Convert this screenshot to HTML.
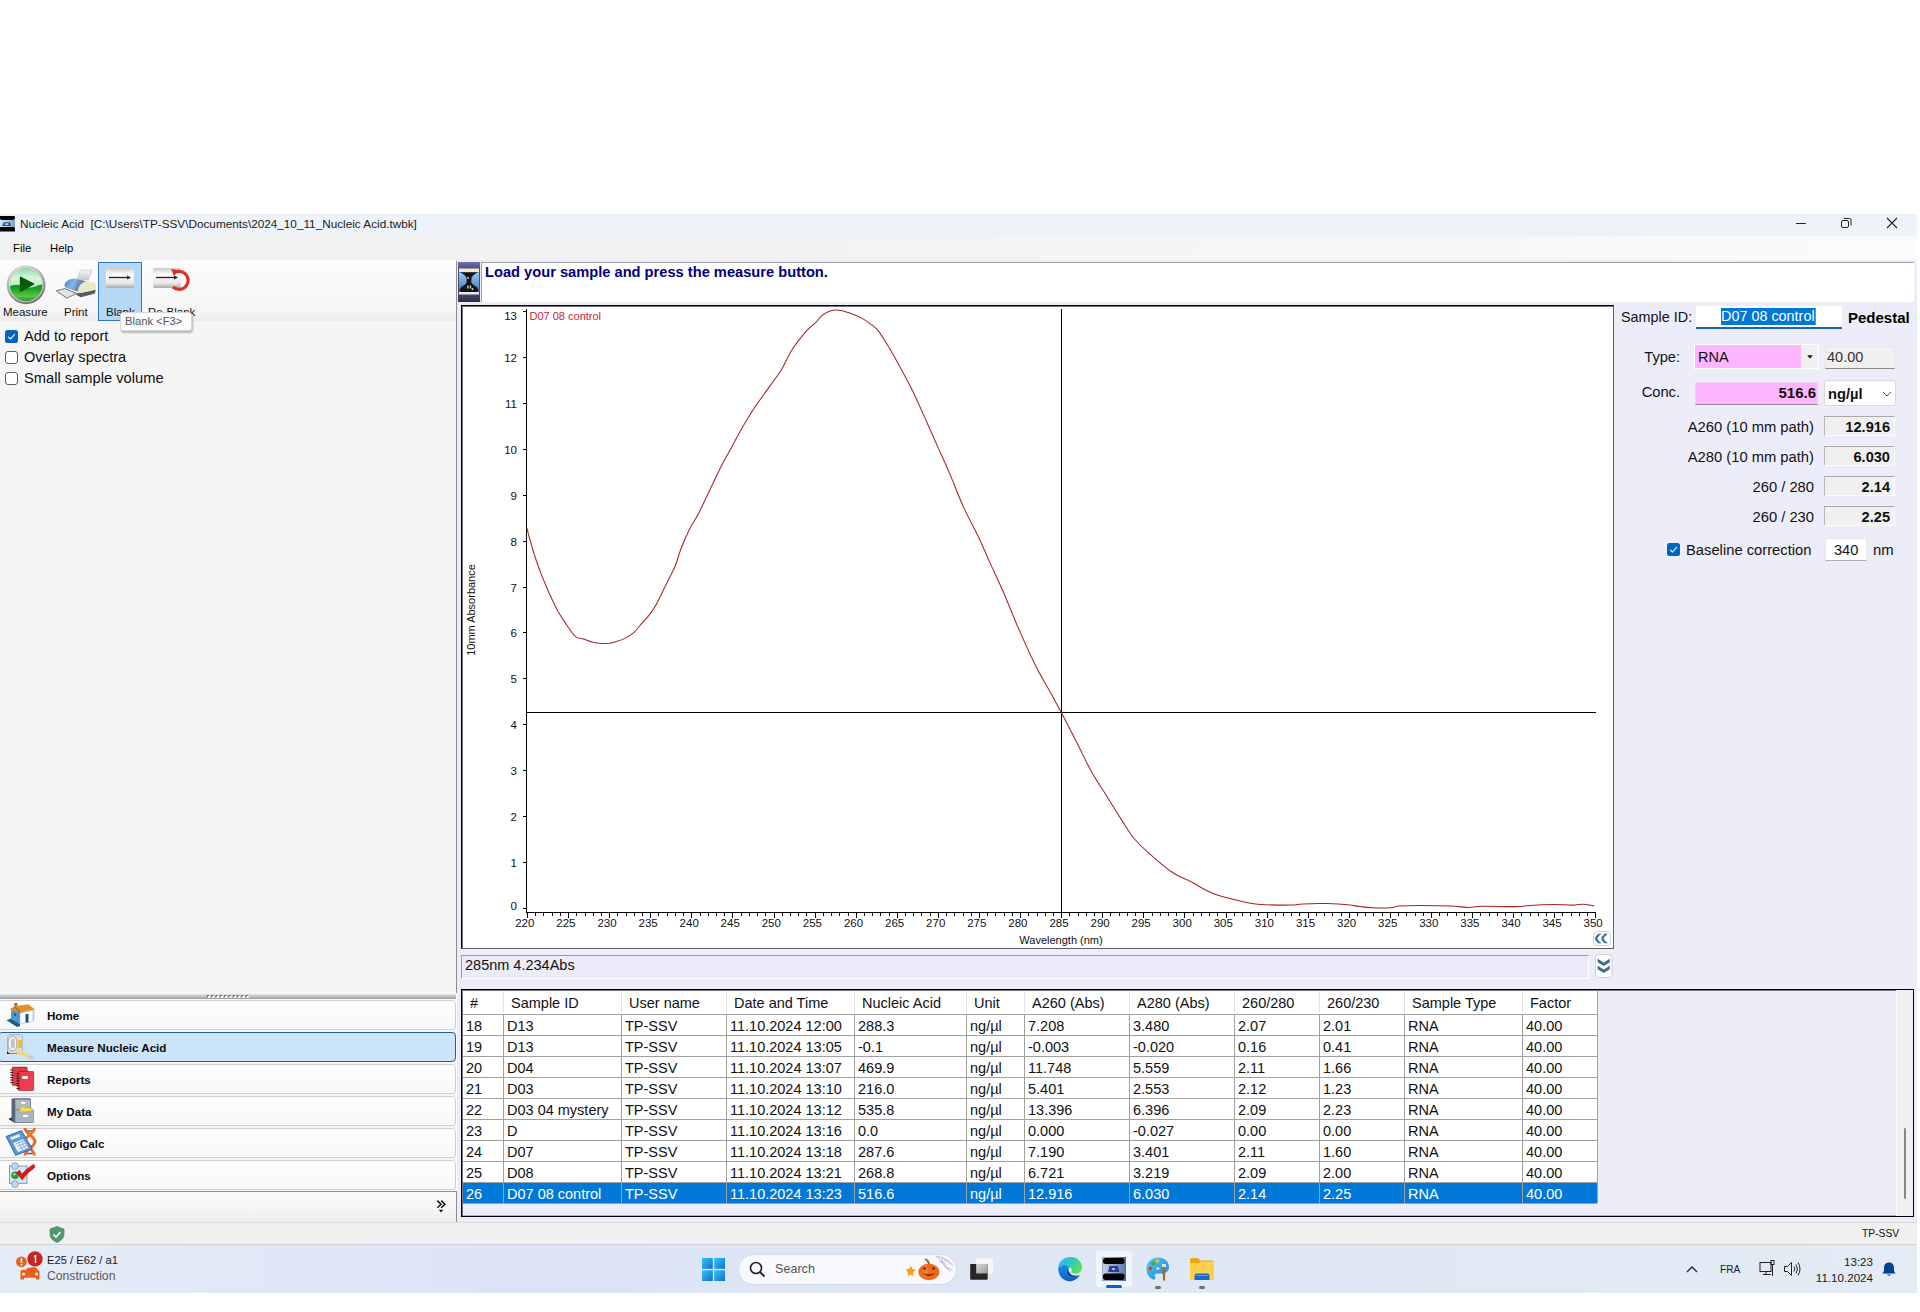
<!DOCTYPE html><html><head><meta charset="utf-8"><style>
*{box-sizing:border-box}
html,body{margin:0;padding:0}
body{width:1920px;height:1312px;position:relative;overflow:hidden;background:#fff;font-family:"Liberation Sans", sans-serif;color:#000}
.a{position:absolute}
.t{position:absolute;white-space:nowrap;line-height:1}
</style></head><body>

<div class="a" style="left:0;top:214px;width:1917px;height:22px;background:#eef2f9;border-top:1px solid #e9ecf2"></div>
<svg class="a" style="left:0;top:216px" width="16" height="16" viewBox="0 0 16 16">
<defs><linearGradient id="ti" x1="0" y1="0" x2="1" y2="0"><stop offset="0" stop-color="#d6e2ef"/><stop offset="0.6" stop-color="#a9c4e2"/><stop offset="1" stop-color="#7f9cc0"/></linearGradient></defs>
<rect x="0" y="3.5" width="15" height="8" fill="url(#ti)"/>
<path d="M0,0 H14 Q15,0 15,1 V2.5 L13,4 H1.5 L0,3 Z" fill="#050505"/>
<path d="M2,10 L3.8,6.3 H10.2 L11,10 Z" fill="#27579a"/>
<ellipse cx="6.7" cy="8.1" rx="2.1" ry="0.9" fill="#a9d2fa"/>
<path d="M0,11 H14 L15,12 V15.6 H0 Z" fill="#050505"/>
</svg>
<div class="t" style="left:20px;top:218px;font-size:11.75px;color:#1a1a1a">Nucleic Acid&nbsp; [C:\Users\TP-SSV\Documents\2024_10_11_Nucleic Acid.twbk]</div>
<div class="a" style="left:1796px;top:223px;width:10px;height:1px;background:#222"></div>
<svg class="a" style="left:1840px;top:217px" width="13" height="12" viewBox="0 0 13 12"><rect x="1.5" y="3.5" width="7" height="7" rx="1.5" fill="none" stroke="#222" stroke-width="1"/><path d="M4,1.5 H9.5 A1.5,1.5 0 0 1 11,3 V8.5" fill="none" stroke="#222" stroke-width="1"/></svg>
<svg class="a" style="left:1886px;top:217px" width="12" height="12" viewBox="0 0 12 12"><path d="M1,1 L11,11 M11,1 L1,11" stroke="#222" stroke-width="1.1"/></svg>
<div class="a" style="left:0;top:236px;width:1917px;height:24px;background:linear-gradient(90deg,#f1f1f1 0%,#f3f3f3 45%,#f7f7f7 75%,#fbfbfb 100%)"></div>
<div class="t" style="left:13px;top:243px;font-size:11.3px">File</div>
<div class="t" style="left:50px;top:243px;font-size:11.3px">Help</div>
<div class="a" style="left:0;top:260px;width:456px;height:962px;background:#f5f5f5"></div>
<div class="a" style="left:0;top:260px;width:456px;height:61px;background:linear-gradient(#fcfcfc 0%,#f8f8f8 50%,#f5f5f5 85%,#ebebeb 100%)"></div>
<div class="a" style="left:456px;top:261px;width:1px;height:732px;background:#8e8e8e"></div>
<svg class="a" style="left:5px;top:264px" width="42" height="42" viewBox="0 0 42 42">
<defs><linearGradient id="gr" x1="0.3" y1="0" x2="0.7" y2="1"><stop offset="0" stop-color="#d9d9d9"/><stop offset="1" stop-color="#6f6f6f"/></linearGradient>
<linearGradient id="gt" x1="0" y1="0" x2="0" y2="1"><stop offset="0" stop-color="#8fdca6"/><stop offset="0.5" stop-color="#d6f6dc"/><stop offset="1" stop-color="#b9ecc4"/></linearGradient>
<linearGradient id="gb" x1="0" y1="0" x2="0" y2="1"><stop offset="0" stop-color="#0f8f1a"/><stop offset="0.6" stop-color="#12a21c"/><stop offset="0.85" stop-color="#62c04a"/><stop offset="1" stop-color="#1a9a22"/></linearGradient></defs>
<circle cx="21.1" cy="20.8" r="19.4" fill="url(#gr)"/>
<circle cx="21.1" cy="20.8" r="17.4" fill="#f4f4f4" opacity="0.5"/>
<circle cx="21.1" cy="20.8" r="16.2" fill="url(#gb)"/>
<path d="M4.9,20.5 A16.2,16.2 0 0 1 37.3,20.5 Q33,21 30,22.5 Q24,24.5 18,22 Q12,19.5 4.9,22 Z" fill="url(#gt)"/>
<path d="M15.6,12.6 Q14.8,12.2 14.8,13.2 V27.3 Q14.8,28.4 15.7,27.9 L29.1,20.6 Q29.8,20.1 29.1,19.6 Z" fill="#045c06"/>
</svg>
<div class="t" style="left:3px;top:307px;font-size:11.5px;color:#111">Measure</div>
<svg class="a" style="left:54px;top:266px" width="44" height="36" viewBox="0 0 44 36">
<defs><linearGradient id="pb" x1="0" y1="0" x2="1" y2="0.3"><stop offset="0" stop-color="#4f7fbf"/><stop offset="0.5" stop-color="#88b6e2"/><stop offset="1" stop-color="#3f5f8f"/></linearGradient>
<linearGradient id="pp" x1="0" y1="0" x2="0" y2="1"><stop offset="0" stop-color="#f4f4f4"/><stop offset="1" stop-color="#c9c9cf"/></linearGradient></defs>
<path d="M26.3,4.1 L37.9,4.1 L34.3,14.3 L23.3,12.9 Z" fill="url(#pp)" stroke="#b8b8b8" stroke-width="0.5"/>
<path d="M22,27.4 L41.7,23.4 L41,27.6 L26.9,31.2 L22.5,29 Z" fill="#5d5d5d"/>
<path d="M23.6,19.2 Q25,15.6 32.4,15.2 L41.2,17 Q42.2,20 41.7,23.8 L27.4,27 L23.6,25.5 Z" fill="#e9e7cc"/>
<path d="M10.4,19 Q11,13.8 20.9,12.6 L31.8,15.2 Q25,17 23.6,25.4 L13.7,22.5 Q10.4,21 10.4,19 Z" fill="url(#pb)"/>
<path d="M2.2,24.7 L11,22.6 L22.4,27.4 L12.9,32.2 Z" fill="#e3e3e6" stroke="#6a6a6a" stroke-width="0.9"/>
</svg>
<div class="t" style="left:64px;top:307px;font-size:11.5px;color:#111">Print</div>
<div class="a" style="left:98px;top:262px;width:44px;height:59px;background:#b5d8f5;border:1px solid #2a78c2"></div>
<svg class="a" style="left:105px;top:267px" width="30" height="22" viewBox="0 0 30 22">
<defs><linearGradient id="bg1" x1="0" y1="0" x2="0" y2="1"><stop offset="0" stop-color="#c9c9c9"/><stop offset="0.3" stop-color="#fbfbfb"/><stop offset="0.75" stop-color="#e9e9e9"/><stop offset="1" stop-color="#a9a9a9"/></linearGradient></defs>
<rect x="1" y="1" width="28" height="20" rx="2" fill="url(#bg1)"/>
<path d="M4,10.5 H23" stroke="#222" stroke-width="1.3"/><path d="M22,8.5 L26,10.5 L22,12.5 Z" fill="#222"/>
</svg>
<div class="t" style="left:106px;top:307px;font-size:11.5px;color:#111">Blank</div>
<svg class="a" style="left:152px;top:267px" width="42" height="28" viewBox="0 0 42 28">
<rect x="1" y="1" width="28" height="20" rx="2" fill="url(#bg1)"/>
<path d="M4,10.5 H23" stroke="#222" stroke-width="1.3"/><path d="M22,8.5 L26,10.5 L22,12.5 Z" fill="#222"/>
<path d="M24,5 A9,9 0 1 1 21,20" fill="none" stroke="#e0302a" stroke-width="3.2"/>
<path d="M19,2 L27,3 L22,9 Z" fill="#e0302a"/>
</svg>
<div class="t" style="left:148px;top:307px;font-size:11.5px;color:#111">Re-Blank</div>
<div class="a" style="left:120px;top:312px;width:72px;height:19px;background:#fafafa;border:1px solid #d6d6d6;border-radius:3px;box-shadow:1px 2px 2px rgba(0,0,0,0.25)"></div>
<div class="t" style="left:125px;top:316px;font-size:11.2px;color:#575757">Blank &lt;F3&gt;</div>
<svg class="a" style="left:5px;top:330px" width="13" height="13" viewBox="0 0 13 13"><rect x="0" y="0" width="13" height="13" rx="2.5" fill="#0067c0"/><path d="M3.2,6.8 L5.5,9 L9.8,4.2" fill="none" stroke="#fff" stroke-width="1.1"/></svg>
<div class="t" style="left:24px;top:329px;font-size:14.6px;color:#111">Add to report</div>
<svg class="a" style="left:5px;top:351px" width="13" height="13" viewBox="0 0 13 13"><rect x="0.5" y="0.5" width="12" height="12" rx="2.5" fill="#fdfdfd" stroke="#5c5c5c" stroke-width="1"/></svg>
<div class="t" style="left:24px;top:350px;font-size:14.6px;color:#111">Overlay spectra</div>
<svg class="a" style="left:5px;top:372px" width="13" height="13" viewBox="0 0 13 13"><rect x="0.5" y="0.5" width="12" height="12" rx="2.5" fill="#fdfdfd" stroke="#5c5c5c" stroke-width="1"/></svg>
<div class="t" style="left:24px;top:371px;font-size:14.7px;color:#111">Small sample volume</div>
<div class="a" style="left:0;top:994px;width:456px;height:5px;background:linear-gradient(#e6e6e6,#9c9c9c)"></div>
<svg class="a" style="left:207px;top:995px" width="45" height="4" viewBox="0 0 45 4"><rect x="0.0" y="0" width="2" height="2" fill="#6a6a6a"/><rect x="1.0" y="1" width="2" height="2" fill="#fff"/><rect x="4.3" y="0" width="2" height="2" fill="#6a6a6a"/><rect x="5.3" y="1" width="2" height="2" fill="#fff"/><rect x="8.6" y="0" width="2" height="2" fill="#6a6a6a"/><rect x="9.6" y="1" width="2" height="2" fill="#fff"/><rect x="12.9" y="0" width="2" height="2" fill="#6a6a6a"/><rect x="13.9" y="1" width="2" height="2" fill="#fff"/><rect x="17.2" y="0" width="2" height="2" fill="#6a6a6a"/><rect x="18.2" y="1" width="2" height="2" fill="#fff"/><rect x="21.5" y="0" width="2" height="2" fill="#6a6a6a"/><rect x="22.5" y="1" width="2" height="2" fill="#fff"/><rect x="25.8" y="0" width="2" height="2" fill="#6a6a6a"/><rect x="26.8" y="1" width="2" height="2" fill="#fff"/><rect x="30.1" y="0" width="2" height="2" fill="#6a6a6a"/><rect x="31.1" y="1" width="2" height="2" fill="#fff"/><rect x="34.4" y="0" width="2" height="2" fill="#6a6a6a"/><rect x="35.4" y="1" width="2" height="2" fill="#fff"/><rect x="38.7" y="0" width="2" height="2" fill="#6a6a6a"/><rect x="39.7" y="1" width="2" height="2" fill="#fff"/></svg>
<div class="a" style="left:-2px;top:1000px;width:458px;height:30px;background:linear-gradient(#fefefe,#f7f7f7);border:1px solid #cfcfcf;border-radius:4px"></div>
<div class="t" style="left:47px;top:1010px;font-size:11.6px;font-weight:bold;color:#0a0a14">Home</div>
<div class="a" style="left:-2px;top:1032px;width:458px;height:30px;background:#cce4f7;border:1px solid #1d5f96;border-radius:4px"></div>
<div class="t" style="left:47px;top:1042px;font-size:11.6px;font-weight:bold;color:#0a0a14">Measure Nucleic Acid</div>
<div class="a" style="left:-2px;top:1064px;width:458px;height:30px;background:linear-gradient(#fefefe,#f7f7f7);border:1px solid #cfcfcf;border-radius:4px"></div>
<div class="t" style="left:47px;top:1074px;font-size:11.6px;font-weight:bold;color:#0a0a14">Reports</div>
<div class="a" style="left:-2px;top:1096px;width:458px;height:30px;background:linear-gradient(#fefefe,#f7f7f7);border:1px solid #cfcfcf;border-radius:4px"></div>
<div class="t" style="left:47px;top:1106px;font-size:11.6px;font-weight:bold;color:#0a0a14">My Data</div>
<div class="a" style="left:-2px;top:1128px;width:458px;height:30px;background:linear-gradient(#fefefe,#f7f7f7);border:1px solid #cfcfcf;border-radius:4px"></div>
<div class="t" style="left:47px;top:1138px;font-size:11.6px;font-weight:bold;color:#0a0a14">Oligo Calc</div>
<div class="a" style="left:-2px;top:1160px;width:458px;height:30px;background:linear-gradient(#fefefe,#f7f7f7);border:1px solid #cfcfcf;border-radius:4px"></div>
<div class="t" style="left:47px;top:1170px;font-size:11.6px;font-weight:bold;color:#0a0a14">Options</div>
<svg class="a" style="left:5px;top:1002px" width="32" height="27" viewBox="5 1002 32 27">
<path d="M6.5,1020.3 L11,1018.5 L20,1024 L20,1026 L17,1027 Z" fill="#1f5a8a"/>
<path d="M11,1011 L14,1007 L20,1013 L20,1024 L11,1019 Z" fill="#4a97d2"/>
<rect x="14" y="1013.2" width="1.6" height="2.8" fill="#1f4f7a"/>
<path d="M20,1013 L34,1010 L34,1020.5 L20,1024 Z" fill="#fbfdff" stroke="#9ab4cc" stroke-width="0.5"/>
<path d="M34,1010 L34,1020.5 L32.5,1021 L32.5,1010.5 Z" fill="#b9cde0"/>
<rect x="25.5" y="1014" width="3" height="8.5" fill="#17577f"/>
<path d="M9.5,1009.5 L14,1006.5 L28.3,1004.3 L35,1009.5 L20,1012.8 Z" fill="#e0902c"/>
<path d="M14,1006.5 L20,1012.8 L21,1012.5 L15,1006.3 Z" fill="#8a5a20"/>
<rect x="14.2" y="1003" width="3.3" height="3" fill="#c0702a"/>
</svg>
<svg class="a" style="left:5px;top:1033px" width="32" height="28" viewBox="5 1033 32 28">
<path d="M7,1051 L7,1054 L17,1054 L17,1050 Z" fill="#111"/>
<rect x="7.5" y="1034.5" width="15" height="19" rx="3" fill="#dcdcdc" stroke="#9a9a9a" stroke-width="0.6"/>
<ellipse cx="12.5" cy="1043.5" rx="4.5" ry="7.5" fill="#f4f4f4" stroke="#8f8f8f" stroke-width="0.8"/>
<ellipse cx="12.8" cy="1043.5" rx="2.2" ry="5" fill="#c4c4c4"/>
<rect x="18.3" y="1040" width="3.5" height="8" fill="#e8c020"/>
<path d="M16,1049.5 L30,1055 L28.8,1058.5 L15.5,1052.5 Z" fill="#eedc70"/>
<path d="M28.5,1054.5 L34.5,1057 L33.5,1060 L27.5,1058 Z" fill="#c8ccd2"/>
</svg>
<svg class="a" style="left:9px;top:1066px" width="26" height="26" viewBox="9 1066 26 26">
<rect x="12.2" y="1067.1" width="15" height="18.3" rx="0.8" fill="#e23a48" stroke="#8a1a22" stroke-width="0.6"/>
<rect x="18" y="1071.5" width="15.7" height="19" rx="0.8" fill="#f03c4c" stroke="#8a1a22" stroke-width="0.6"/>
<rect x="21.7" y="1075.6" width="6.6" height="3.8" rx="1" fill="#fff" stroke="#6a1a20" stroke-width="0.6"/>
<path d="M10.3,1070 h3 M10.3,1072.5 h3 M10.3,1075 h3 M10.3,1077.5 h3 M10.3,1080 h3 M10.3,1082.5 h3 M16.5,1073.5 h3 M16.5,1076 h3 M16.5,1078.5 h3 M16.5,1081 h3 M16.5,1083.5 h3 M16.5,1086 h3 M16.5,1088.5 h3" stroke="#111" stroke-width="0.9"/>
</svg>
<svg class="a" style="left:8px;top:1097px" width="27" height="27" viewBox="8 1097 27 27">
<path d="M8.5,1119 L11.5,1117.5 L15,1120 L15,1123 Z" fill="#1a1a1a"/>
<path d="M11.5,1099 L13,1098.3 L30.7,1098.3 L30.7,1122.7 L15,1122.7 L11.5,1120 Z" fill="#56677d"/>
<rect x="15" y="1099.2" width="15.7" height="10.8" fill="#aeb8c6" stroke="#5a6a7e" stroke-width="0.5"/>
<rect x="15" y="1110" width="18.5" height="12.7" fill="#a9b3c1" stroke="#5a6a7e" stroke-width="0.5"/>
<rect x="21" y="1102" width="4.5" height="1.8" fill="#fff"/>
<rect x="23" y="1115" width="5" height="1.8" fill="#fff"/>
<path d="M19,1112 L20.5,1107 L24,1106 L25,1107.5 L32,1108 L31.7,1111.5 Z" fill="#f4da4a" stroke="#b09020" stroke-width="0.4"/>
</svg>
<svg class="a" style="left:5px;top:1127px" width="32" height="31" viewBox="5 1127 32 31">
<path d="M26.5,1131 H33.5 M27.5,1136 H32.5 M27.5,1146 H32.5 M26.5,1153.5 H33.5" stroke="#2a6aa0" stroke-width="1.3"/>
<path d="M25,1128 C25,1134 35,1136 35,1141.5 C35,1147 25,1149 25,1155.5" fill="none" stroke="#ec6a1e" stroke-width="3"/>
<path d="M34.5,1128 C34.5,1134 24.5,1136 24.5,1141.5 C24.5,1147 34.5,1149 34.5,1155.5" fill="none" stroke="#ee7424" stroke-width="3"/>
<path d="M6.1,1136.5 L21.5,1130.6 L32.2,1148.9 L15.6,1155.3 Z" fill="#5c97d6" stroke="#27508a" stroke-width="0.8"/>
<path d="M10,1137.5 L19,1134 L20.5,1136.5 L11.5,1140 Z" fill="#e6f0fb"/>
<path d="M13,1143 L23,1139 L28.5,1148 L18,1152 Z" fill="#eaf3fd"/>
<path d="M15.5,1144 L25.5,1140 M17,1146.5 L27,1142.5 M18.5,1149 L28,1145 M18,1141.5 L23.5,1150.5 M21,1140.5 L26,1149" stroke="#6fa3da" stroke-width="0.8"/>
</svg>
<svg class="a" style="left:8px;top:1160px" width="28" height="29" viewBox="8 1160 28 29">
<rect x="9.5" y="1166" width="17.5" height="17.3" fill="#d7e8f5" stroke="#7890a8" stroke-width="0.9"/>
<circle cx="15" cy="1166" r="3.4" fill="#b9daf0" stroke="#6a8aa6" stroke-width="0.6"/>
<circle cx="15" cy="1175.3" r="3.5" fill="#2e9e36" stroke="#1a6a20" stroke-width="0.5"/>
<circle cx="14.3" cy="1174.3" r="1.2" fill="#a6e0a8"/>
<circle cx="15" cy="1184.2" r="3.4" fill="#b9daf0" stroke="#6a8aa6" stroke-width="0.6"/>
<path d="M16.5,1172.5 L19.8,1170.3 L21.8,1174.2 Q27,1168 33.8,1164.2 L35,1167.2 Q28,1172 22,1179.8 Z" fill="#e81414" stroke="#8a0000" stroke-width="0.5"/>
</svg>
<div class="a" style="left:0;top:1191px;width:457px;height:32px;background:linear-gradient(#fbfbfb,#efefef);border-top:1px solid #8e8e8e;border-right:1px solid #8e8e8e;border-bottom:1px solid #8a8a8a"></div>
<svg class="a" style="left:436px;top:1199px" width="11" height="16" viewBox="0 0 11 16"><path d="M1.3,1.6 L5,5.2 L1.3,8.8 M5.2,1.6 L8.9,5.2 L5.2,8.8" fill="none" stroke="#111" stroke-width="1.5"/><path d="M2.8,10.8 L7.2,10.8 L5,13.5 Z" fill="#111"/></svg>
<div class="a" style="left:457px;top:260px;width:1460px;height:962px;background:#ededf9"></div>
<svg class="a" style="left:458px;top:262px" width="22" height="40" viewBox="0 0 22 40">
<defs><linearGradient id="mg" x1="0" y1="0" x2="0" y2="1"><stop offset="0" stop-color="#7471b0"/><stop offset="0.17" stop-color="#4e4a78"/><stop offset="0.8" stop-color="#4a4668"/><stop offset="1" stop-color="#2f2c48"/></linearGradient>
<linearGradient id="mb" x1="0" y1="0" x2="0" y2="1"><stop offset="0" stop-color="#9cc8ee"/><stop offset="1" stop-color="#3f7cc6"/></linearGradient></defs>
<rect x="0" y="0" width="22" height="40" fill="url(#mg)"/>
<rect x="1" y="9.5" width="20" height="21" fill="url(#mb)"/>
<rect x="1" y="6.5" width="20" height="3.5" fill="#ece9d9"/>
<path d="M1.5,10.2 H20.5 Q15.5,12 13.6,15.5 L13.2,20 Q13.8,22 15.8,23.2 Q20.2,25.2 20.6,28.8 Q19.5,31 11,31 Q2.5,31 1.4,28.8 Q1.8,25.2 6.2,23.2 Q8.2,22 8.8,20 L8.4,15.5 Q6.5,12 1.5,10.2 Z" fill="#141414"/>
<rect x="9.3" y="23.5" width="1.3" height="3" fill="#e8e8e8"/><rect x="11.8" y="23.5" width="1.3" height="3" fill="#d8d8d8"/>
<circle cx="10" cy="16" r="0.9" fill="#e0e0e0"/><circle cx="14.5" cy="27" r="1" fill="#d9d2b0"/>
<rect x="1" y="30" width="20" height="2.5" fill="#e4e8ec"/>
</svg>
<div class="a" style="left:481px;top:262px;width:1433px;height:40px;background:#fff;border-top:1px solid #a0a0a0;border-left:1px solid #a0a0a0"></div>
<div class="t" style="left:485px;top:265px;font-size:14.66px;font-weight:bold;color:#00007c">Load your sample and press the measure button.</div>
<div class="a" style="left:461px;top:305px;width:1153px;height:644px;background:#fff;border:1px solid #000;border-right-color:#606060;border-bottom-color:#606060;box-shadow:inset 1px 1px 0 rgba(0,0,0,0.55)"></div>
<svg class="a" style="left:0;top:0" width="1920" height="1312" viewBox="0 0 1920 1312">
<g shape-rendering="crispEdges" stroke="#000" stroke-width="1">
<path d="M526.5,309 V912.5 M526,912.5 H1596"/>
<path d="M523,908.5 H526"/>
<path d="M523,862.5 H526"/>
<path d="M523,816.5 H526"/>
<path d="M523,770.5 H526"/>
<path d="M523,724.5 H526"/>
<path d="M523,678.5 H526"/>
<path d="M523,632.5 H526"/>
<path d="M523,587.5 H526"/>
<path d="M523,541.5 H526"/>
<path d="M523,495.5 H526"/>
<path d="M523,449.5 H526"/>
<path d="M523,403.5 H526"/>
<path d="M523,357.5 H526"/>
<path d="M523,311.5 H526"/>
<path d="M527.5,913 V918"/>
<path d="M535.5,913 V916"/>
<path d="M543.5,913 V916"/>
<path d="M552.5,913 V916"/>
<path d="M560.5,913 V916"/>
<path d="M568.5,913 V918"/>
<path d="M576.5,913 V916"/>
<path d="M585.5,913 V916"/>
<path d="M593.5,913 V916"/>
<path d="M601.5,913 V916"/>
<path d="M609.5,913 V918"/>
<path d="M617.5,913 V916"/>
<path d="M626.5,913 V916"/>
<path d="M634.5,913 V916"/>
<path d="M642.5,913 V916"/>
<path d="M650.5,913 V918"/>
<path d="M658.5,913 V916"/>
<path d="M667.5,913 V916"/>
<path d="M675.5,913 V916"/>
<path d="M683.5,913 V916"/>
<path d="M691.5,913 V918"/>
<path d="M700.5,913 V916"/>
<path d="M708.5,913 V916"/>
<path d="M716.5,913 V916"/>
<path d="M724.5,913 V916"/>
<path d="M732.5,913 V918"/>
<path d="M741.5,913 V916"/>
<path d="M749.5,913 V916"/>
<path d="M757.5,913 V916"/>
<path d="M765.5,913 V916"/>
<path d="M774.5,913 V918"/>
<path d="M782.5,913 V916"/>
<path d="M790.5,913 V916"/>
<path d="M798.5,913 V916"/>
<path d="M806.5,913 V916"/>
<path d="M815.5,913 V918"/>
<path d="M823.5,913 V916"/>
<path d="M831.5,913 V916"/>
<path d="M839.5,913 V916"/>
<path d="M848.5,913 V916"/>
<path d="M856.5,913 V918"/>
<path d="M864.5,913 V916"/>
<path d="M872.5,913 V916"/>
<path d="M880.5,913 V916"/>
<path d="M889.5,913 V916"/>
<path d="M897.5,913 V918"/>
<path d="M905.5,913 V916"/>
<path d="M913.5,913 V916"/>
<path d="M921.5,913 V916"/>
<path d="M930.5,913 V916"/>
<path d="M938.5,913 V918"/>
<path d="M946.5,913 V916"/>
<path d="M954.5,913 V916"/>
<path d="M963.5,913 V916"/>
<path d="M971.5,913 V916"/>
<path d="M979.5,913 V918"/>
<path d="M987.5,913 V916"/>
<path d="M995.5,913 V916"/>
<path d="M1004.5,913 V916"/>
<path d="M1012.5,913 V916"/>
<path d="M1020.5,913 V918"/>
<path d="M1028.5,913 V916"/>
<path d="M1037.5,913 V916"/>
<path d="M1045.5,913 V916"/>
<path d="M1053.5,913 V916"/>
<path d="M1061.5,913 V918"/>
<path d="M1069.5,913 V916"/>
<path d="M1078.5,913 V916"/>
<path d="M1086.5,913 V916"/>
<path d="M1094.5,913 V916"/>
<path d="M1102.5,913 V918"/>
<path d="M1110.5,913 V916"/>
<path d="M1119.5,913 V916"/>
<path d="M1127.5,913 V916"/>
<path d="M1135.5,913 V916"/>
<path d="M1143.5,913 V918"/>
<path d="M1152.5,913 V916"/>
<path d="M1160.5,913 V916"/>
<path d="M1168.5,913 V916"/>
<path d="M1176.5,913 V916"/>
<path d="M1184.5,913 V918"/>
<path d="M1193.5,913 V916"/>
<path d="M1201.5,913 V916"/>
<path d="M1209.5,913 V916"/>
<path d="M1217.5,913 V916"/>
<path d="M1226.5,913 V918"/>
<path d="M1234.5,913 V916"/>
<path d="M1242.5,913 V916"/>
<path d="M1250.5,913 V916"/>
<path d="M1258.5,913 V916"/>
<path d="M1267.5,913 V918"/>
<path d="M1275.5,913 V916"/>
<path d="M1283.5,913 V916"/>
<path d="M1291.5,913 V916"/>
<path d="M1299.5,913 V916"/>
<path d="M1308.5,913 V918"/>
<path d="M1316.5,913 V916"/>
<path d="M1324.5,913 V916"/>
<path d="M1332.5,913 V916"/>
<path d="M1341.5,913 V916"/>
<path d="M1349.5,913 V918"/>
<path d="M1357.5,913 V916"/>
<path d="M1365.5,913 V916"/>
<path d="M1373.5,913 V916"/>
<path d="M1382.5,913 V916"/>
<path d="M1390.5,913 V918"/>
<path d="M1398.5,913 V916"/>
<path d="M1406.5,913 V916"/>
<path d="M1415.5,913 V916"/>
<path d="M1423.5,913 V916"/>
<path d="M1431.5,913 V918"/>
<path d="M1439.5,913 V916"/>
<path d="M1447.5,913 V916"/>
<path d="M1456.5,913 V916"/>
<path d="M1464.5,913 V916"/>
<path d="M1472.5,913 V918"/>
<path d="M1480.5,913 V916"/>
<path d="M1489.5,913 V916"/>
<path d="M1497.5,913 V916"/>
<path d="M1505.5,913 V916"/>
<path d="M1513.5,913 V918"/>
<path d="M1521.5,913 V916"/>
<path d="M1530.5,913 V916"/>
<path d="M1538.5,913 V916"/>
<path d="M1546.5,913 V916"/>
<path d="M1554.5,913 V918"/>
<path d="M1562.5,913 V916"/>
<path d="M1571.5,913 V916"/>
<path d="M1579.5,913 V916"/>
<path d="M1587.5,913 V916"/>
<path d="M1595.5,913 V918"/>
<path d="M1061.5,309 V912 M526,712.5 H1596"/>
</g>
<path d="M527.1,528.3 C527.4,529.7 527.8,532.1 529.1,536.6 C530.4,541.1 532.6,549.2 534.6,555.5 C536.6,561.8 539.2,568.8 541.3,574.4 C543.4,580.0 545.4,584.3 547.4,589.0 C549.4,593.7 551.8,598.7 553.5,602.4 C555.2,606.1 555.7,607.3 557.8,611.0 C559.9,614.7 563.3,620.1 566.3,624.4 C569.2,628.7 572.6,634.2 575.5,636.6 C578.4,639.0 580.6,638.1 583.4,639.0 C586.1,639.9 589.4,641.4 592.0,642.1 C594.6,642.8 596.5,643.1 599.3,643.3 C602.1,643.5 606.4,643.5 609.0,643.3 C611.6,643.0 612.5,642.6 615.1,641.8 C617.8,641.0 621.9,639.9 624.9,638.4 C627.9,636.9 630.5,635.4 633.4,632.9 C636.2,630.4 639.1,626.5 642.0,623.2 C644.9,620.0 648.1,616.6 650.5,613.4 C652.9,610.1 654.4,607.8 656.6,603.7 C658.8,599.6 661.7,593.5 663.9,589.0 C666.1,584.5 668.1,580.8 670.0,576.8 C671.9,572.8 673.7,569.9 675.5,565.2 C677.3,560.5 678.7,554.8 681.0,548.8 C683.3,542.8 686.7,535.0 689.5,529.3 C692.3,523.6 694.6,521.2 698.0,514.6 C701.4,508.0 706.0,497.9 710.1,489.4 C714.2,480.9 719.1,470.3 722.6,463.5 C726.1,456.7 727.8,454.3 731.0,448.4 C734.2,442.5 738.1,434.8 741.9,428.2 C745.7,421.6 750.0,414.6 753.6,409.0 C757.2,403.4 759.5,400.6 763.7,394.7 C767.9,388.8 775.4,378.7 778.8,373.8 C782.1,368.9 781.6,369.4 783.8,365.4 C786.0,361.3 788.6,355.1 792.2,349.5 C795.8,343.9 801.7,336.4 805.6,331.9 C809.5,327.4 812.9,325.4 815.7,322.6 C818.5,319.8 819.8,317.1 822.4,315.1 C825.0,313.1 828.5,311.2 831.6,310.4 C834.7,309.6 837.6,309.9 840.8,310.4 C844.0,310.9 847.5,312.2 850.9,313.4 C854.2,314.6 857.5,315.8 860.9,317.6 C864.2,319.4 868.2,322.2 871.0,324.3 C873.8,326.4 875.2,327.1 877.7,330.2 C880.2,333.3 883.3,338.2 886.1,342.7 C888.9,347.2 890.2,349.2 894.5,357.0 C898.8,364.8 906.5,378.5 911.8,389.2 C917.1,399.9 921.9,411.4 926.3,421.0 C930.6,430.6 934.0,438.4 937.9,447.1 C941.8,455.8 945.2,463.0 949.5,473.1 C953.8,483.2 959.1,497.3 963.9,507.9 C968.7,518.5 974.0,527.6 978.4,536.8 C982.8,546.0 985.6,553.2 990.0,562.9 C994.4,572.5 999.7,583.6 1004.5,594.7 C1009.3,605.8 1013.6,617.3 1018.9,629.4 C1024.2,641.5 1031.0,656.5 1036.3,667.1 C1041.6,677.7 1046.7,685.6 1050.8,693.1 C1054.9,700.6 1056.8,704.1 1061.1,712.1 C1065.3,720.1 1071.2,731.5 1076.3,741.4 C1081.3,751.3 1086.4,762.5 1091.4,771.6 C1096.4,780.7 1101.5,787.7 1106.5,795.7 C1111.5,803.8 1117.1,812.9 1121.6,819.9 C1126.1,826.9 1129.2,832.5 1133.7,838.0 C1138.2,843.5 1142.3,847.3 1148.8,853.1 C1155.3,858.9 1165.9,868.0 1172.9,872.8 C1180.0,877.6 1185.0,878.6 1191.1,881.8 C1197.1,885.0 1204.2,889.4 1209.2,891.8 C1214.2,894.2 1215.8,894.7 1221.3,896.3 C1226.8,897.9 1236.4,900.2 1242.4,901.5 C1248.4,902.8 1249.4,903.6 1257.5,904.2 C1265.6,904.8 1283.2,905.2 1290.8,905.1 C1298.3,905.0 1296.8,904.1 1302.8,903.9 C1308.8,903.6 1319.4,903.5 1327.0,903.6 C1334.6,903.8 1342.7,904.3 1348.2,904.8 C1353.7,905.3 1356.2,906.1 1360.2,906.6 C1364.2,907.1 1367.2,907.6 1372.3,907.8 C1377.3,908.0 1386.0,908.1 1390.5,907.8 C1395.0,907.5 1394.5,906.4 1399.5,906.0 C1404.5,905.6 1412.1,905.4 1420.7,905.4 C1429.3,905.4 1442.9,905.6 1450.9,906.0 C1459.0,906.4 1464.0,907.5 1469.0,907.5 C1474.0,907.5 1473.0,906.4 1481.1,906.3 C1489.1,906.1 1509.2,906.8 1517.3,906.6 C1525.3,906.5 1523.4,905.8 1529.4,905.4 C1535.5,905.0 1546.5,904.5 1553.6,904.5 C1560.6,904.5 1566.7,905.1 1571.7,905.1 C1576.7,905.1 1580.0,904.1 1583.8,904.2 C1587.6,904.4 1592.6,905.7 1594.4,906.0" fill="none" stroke="#a82222" stroke-width="1.05" stroke-linejoin="round"/>
<g font-family='"Liberation Sans", sans-serif' font-size="11.5" fill="#111">
<text x="517" y="909.5" text-anchor="end">0</text>
<text x="517" y="866.5" text-anchor="end">1</text>
<text x="517" y="820.5" text-anchor="end">2</text>
<text x="517" y="774.5" text-anchor="end">3</text>
<text x="517" y="728.5" text-anchor="end">4</text>
<text x="517" y="682.5" text-anchor="end">5</text>
<text x="517" y="636.5" text-anchor="end">6</text>
<text x="517" y="591.5" text-anchor="end">7</text>
<text x="517" y="545.5" text-anchor="end">8</text>
<text x="517" y="499.5" text-anchor="end">9</text>
<text x="517" y="453.5" text-anchor="end">10</text>
<text x="517" y="407.5" text-anchor="end">11</text>
<text x="517" y="361.5" text-anchor="end">12</text>
<text x="517" y="319.5" text-anchor="end">13</text>
<text x="524.8" y="927" text-anchor="middle">220</text>
<text x="565.9" y="927" text-anchor="middle">225</text>
<text x="607.0" y="927" text-anchor="middle">230</text>
<text x="648.1" y="927" text-anchor="middle">235</text>
<text x="689.2" y="927" text-anchor="middle">240</text>
<text x="730.2" y="927" text-anchor="middle">245</text>
<text x="771.3" y="927" text-anchor="middle">250</text>
<text x="812.4" y="927" text-anchor="middle">255</text>
<text x="853.5" y="927" text-anchor="middle">260</text>
<text x="894.6" y="927" text-anchor="middle">265</text>
<text x="935.7" y="927" text-anchor="middle">270</text>
<text x="976.8" y="927" text-anchor="middle">275</text>
<text x="1017.9" y="927" text-anchor="middle">280</text>
<text x="1059.0" y="927" text-anchor="middle">285</text>
<text x="1100.1" y="927" text-anchor="middle">290</text>
<text x="1141.1" y="927" text-anchor="middle">295</text>
<text x="1182.2" y="927" text-anchor="middle">300</text>
<text x="1223.3" y="927" text-anchor="middle">305</text>
<text x="1264.4" y="927" text-anchor="middle">310</text>
<text x="1305.5" y="927" text-anchor="middle">315</text>
<text x="1346.6" y="927" text-anchor="middle">320</text>
<text x="1387.7" y="927" text-anchor="middle">325</text>
<text x="1428.8" y="927" text-anchor="middle">330</text>
<text x="1469.9" y="927" text-anchor="middle">335</text>
<text x="1511.0" y="927" text-anchor="middle">340</text>
<text x="1552.0" y="927" text-anchor="middle">345</text>
<text x="1593.1" y="927" text-anchor="middle">350</text>
<text x="1061" y="943.5" text-anchor="middle" font-size="11">Wavelength (nm)</text>
<text transform="translate(475,610) rotate(-90)" text-anchor="middle" font-size="11">10mm Absorbance</text>
<text x="529.5" y="320" font-size="11" fill="#cc2433">D07 08 control</text>
</g>
</svg>
<svg class="a" style="left:1593px;top:931px" width="19" height="16" viewBox="0 0 19 16"><rect x="0.5" y="0.5" width="17" height="14" rx="3" fill="#fdfdfd" stroke="#d0d0d0"/><path d="M7.8,3 Q4.5,5.5 4,7.5 Q4.5,9.5 7.8,12 L5.5,12 Q2.5,10 2.2,7.5 Q2.5,5 5.5,3 Z M14.2,3 Q10.8,5.5 10.3,7.5 Q10.8,9.5 14.2,12 L11.8,12 Q8.8,10 8.5,7.5 Q8.8,5 11.8,3 Z" fill="#3d6c8c" stroke="#3d6c8c" stroke-width="0.6"/></svg>
<div class="a" style="left:461px;top:955px;width:1128px;height:24px;background:#ebebf9;border-top:1px solid #9a9a9a;border-left:1px solid #9a9a9a;border-bottom:1px solid #fff;border-right:1px solid #fff"></div>
<div class="t" style="left:465px;top:958px;font-size:14.5px;color:#111">285nm 4.234Abs</div>
<svg class="a" style="left:1595px;top:954px" width="18" height="24" viewBox="0 0 18 24"><rect x="0.5" y="0.5" width="16.5" height="23" rx="3" fill="#fdfdfd" stroke="#d0d0d0"/><path d="M2.6,4.8 L8.7,8.6 L14.8,4.8 V8.2 L8.7,12 L2.6,8.2 Z M2.6,11.8 L8.7,15.6 L14.8,11.8 V15.2 L8.7,19 L2.6,15.2 Z" fill="#3d6c8c"/></svg>
<div class="t" style="left:1621px;top:310px;font-size:14.4px;color:#111">Sample ID:</div>
<div class="a" style="left:1696px;top:306px;width:146px;height:23px;background:#fff;border-bottom:2px solid #1a64b4"></div>
<div class="a" style="left:1721px;top:308px;width:95px;height:17px;background:#0078d7"></div>
<div class="t" style="left:1721px;top:309px;font-size:14.4px;color:#fff">D07 08 control</div>
<div class="a" style="left:1815px;top:308px;width:1px;height:17px;background:#e07a00"></div>
<div class="t" style="left:1848px;top:310px;font-size:15px;font-weight:bold;color:#000">Pedestal</div>
<div class="t" style="right:240px;top:350px;font-size:14.6px;color:#111">Type:</div>
<div class="a" style="left:1694px;top:344px;width:125px;height:25px;background:#f0f0f0;border:1px solid #fff"></div>
<div class="a" style="left:1695px;top:345px;width:106px;height:23px;background:#ffb6ff"></div>
<div class="t" style="left:1698px;top:350px;font-size:14.5px;color:#111">RNA</div>
<svg class="a" style="left:1806px;top:355px" width="8" height="4" viewBox="0 0 8 4"><path d="M1.2,0.3 L6.8,0.3 L4,3.5 Z" fill="#111"/></svg>
<div class="a" style="left:1825px;top:346px;width:70px;height:23px;background:#f0f0f0;border:1px solid #e6e6e6;border-bottom:1px solid #8a8a8a"></div>
<div class="t" style="left:1827px;top:350px;font-size:14.5px;color:#333">40.00</div>
<div class="t" style="right:240px;top:385px;font-size:14.7px;color:#111">Conc.</div>
<div class="a" style="left:1695px;top:382px;width:123px;height:23px;background:#ffb6ff;border:1px solid #f3d2f3;border-bottom:1px solid #8a8a8a"></div>
<div class="t" style="right:104px;top:385px;font-size:15px;font-weight:bold;color:#111">516.6</div>
<div class="a" style="left:1824px;top:380px;width:72px;height:26px;background:#fff;border:1px solid #d9d9d9;border-radius:2px"></div>
<div class="t" style="left:1828px;top:387px;font-size:14.7px;font-weight:bold;color:#111">ng/µl</div>
<svg class="a" style="left:1882px;top:391px" width="10" height="6" viewBox="0 0 10 6"><path d="M1,1 L5,5 L9,1" fill="none" stroke="#555" stroke-width="1"/></svg>
<div class="t" style="right:106px;top:420px;font-size:14.75px;color:#111">A260 (10 mm path)</div>
<div class="a" style="left:1824px;top:416px;width:71px;height:20px;background:#f0f0f0;border:1px solid #fbfbfb;border-top-color:#a9a9a9;border-left-color:#b9b9b9"></div>
<div class="t" style="right:30px;top:420px;font-size:14.6px;font-weight:bold;color:#111">12.916</div>
<div class="t" style="right:106px;top:450px;font-size:14.75px;color:#111">A280 (10 mm path)</div>
<div class="a" style="left:1824px;top:446px;width:71px;height:20px;background:#f0f0f0;border:1px solid #fbfbfb;border-top-color:#a9a9a9;border-left-color:#b9b9b9"></div>
<div class="t" style="right:30px;top:450px;font-size:14.6px;font-weight:bold;color:#111">6.030</div>
<div class="t" style="right:106px;top:480px;font-size:14.75px;color:#111">260 / 280</div>
<div class="a" style="left:1824px;top:476px;width:71px;height:20px;background:#f0f0f0;border:1px solid #fbfbfb;border-top-color:#a9a9a9;border-left-color:#b9b9b9"></div>
<div class="t" style="right:30px;top:480px;font-size:14.6px;font-weight:bold;color:#111">2.14</div>
<div class="t" style="right:106px;top:510px;font-size:14.75px;color:#111">260 / 230</div>
<div class="a" style="left:1824px;top:506px;width:71px;height:20px;background:#f0f0f0;border:1px solid #fbfbfb;border-top-color:#a9a9a9;border-left-color:#b9b9b9"></div>
<div class="t" style="right:30px;top:510px;font-size:14.6px;font-weight:bold;color:#111">2.25</div>
<svg class="a" style="left:1667px;top:543px" width="13" height="13" viewBox="0 0 13 13"><rect x="0" y="0" width="13" height="13" rx="2.5" fill="#0067c0"/><path d="M3.2,6.8 L5.5,9 L9.8,4.2" fill="none" stroke="#fff" stroke-width="1.1"/></svg>
<div class="t" style="left:1686px;top:543px;font-size:14.75px;color:#111">Baseline correction</div>
<div class="a" style="left:1825px;top:538px;width:42px;height:23px;background:#fff;border:1px solid #e6e6e6;border-bottom-color:#b0b0b0"></div>
<div class="t" style="left:1834px;top:543px;font-size:14.6px;color:#111">340</div>
<div class="t" style="left:1873px;top:543px;font-size:14.9px;color:#111">nm</div>
<div class="a" style="left:461px;top:989px;width:1453px;height:228px;background:#ededf9;border:1px solid #000;box-shadow:inset 1px 1px 0 rgba(0,0,0,0.5),inset -1px -1px 0 rgba(0,0,0,0.25)"></div>
<div class="a" style="left:1896px;top:990px;width:17px;height:226px;background:#f0f0f0;border-left:1px solid #fbfbfb"></div>
<div class="a" style="left:1904px;top:1128px;width:2px;height:71px;background:#888;border-radius:1px"></div>
<div class="a" style="left:463px;top:991px;width:1134px;height:24px;background:#fff;border-bottom:1px solid #a0a0a0"></div>
<div class="t" style="left:470px;top:996px;font-size:14.5px;color:#111">#</div>
<div class="a" style="left:503px;top:991px;width:1px;height:22px;background:#e4e4e4"></div>
<div class="t" style="left:511px;top:996px;font-size:14.5px;color:#111">Sample ID</div>
<div class="a" style="left:621px;top:991px;width:1px;height:22px;background:#e4e4e4"></div>
<div class="t" style="left:629px;top:996px;font-size:14.5px;color:#111">User name</div>
<div class="a" style="left:726px;top:991px;width:1px;height:22px;background:#e4e4e4"></div>
<div class="t" style="left:734px;top:996px;font-size:14.5px;color:#111">Date and Time</div>
<div class="a" style="left:854px;top:991px;width:1px;height:22px;background:#e4e4e4"></div>
<div class="t" style="left:862px;top:996px;font-size:14.5px;color:#111">Nucleic Acid</div>
<div class="a" style="left:966px;top:991px;width:1px;height:22px;background:#e4e4e4"></div>
<div class="t" style="left:974px;top:996px;font-size:14.5px;color:#111">Unit</div>
<div class="a" style="left:1024px;top:991px;width:1px;height:22px;background:#e4e4e4"></div>
<div class="t" style="left:1032px;top:996px;font-size:14.5px;color:#111">A260 (Abs)</div>
<div class="a" style="left:1129px;top:991px;width:1px;height:22px;background:#e4e4e4"></div>
<div class="t" style="left:1137px;top:996px;font-size:14.5px;color:#111">A280 (Abs)</div>
<div class="a" style="left:1234px;top:991px;width:1px;height:22px;background:#e4e4e4"></div>
<div class="t" style="left:1242px;top:996px;font-size:14.5px;color:#111">260/280</div>
<div class="a" style="left:1319px;top:991px;width:1px;height:22px;background:#e4e4e4"></div>
<div class="t" style="left:1327px;top:996px;font-size:14.5px;color:#111">260/230</div>
<div class="a" style="left:1404px;top:991px;width:1px;height:22px;background:#e4e4e4"></div>
<div class="t" style="left:1412px;top:996px;font-size:14.5px;color:#111">Sample Type</div>
<div class="a" style="left:1522px;top:991px;width:1px;height:22px;background:#e4e4e4"></div>
<div class="t" style="left:1530px;top:996px;font-size:14.5px;color:#111">Factor</div>
<div class="a" style="left:463px;top:1015px;width:1134px;height:21px;background:#fff;border-bottom:1px solid #a0a0a0"></div>
<div class="t" style="left:466px;top:1019px;font-size:14.5px;color:#111">18</div>
<div class="a" style="left:503px;top:1015px;width:1px;height:21px;background:#a0a0a0"></div>
<div class="t" style="left:507px;top:1019px;font-size:14.5px;color:#111">D13</div>
<div class="a" style="left:621px;top:1015px;width:1px;height:21px;background:#a0a0a0"></div>
<div class="t" style="left:625px;top:1019px;font-size:14.5px;color:#111">TP-SSV</div>
<div class="a" style="left:726px;top:1015px;width:1px;height:21px;background:#a0a0a0"></div>
<div class="t" style="left:730px;top:1019px;font-size:14.5px;color:#111">11.10.2024 12:00</div>
<div class="a" style="left:854px;top:1015px;width:1px;height:21px;background:#a0a0a0"></div>
<div class="t" style="left:858px;top:1019px;font-size:14.5px;color:#111">288.3</div>
<div class="a" style="left:966px;top:1015px;width:1px;height:21px;background:#a0a0a0"></div>
<div class="t" style="left:970px;top:1019px;font-size:14.5px;color:#111">ng/µl</div>
<div class="a" style="left:1024px;top:1015px;width:1px;height:21px;background:#a0a0a0"></div>
<div class="t" style="left:1028px;top:1019px;font-size:14.5px;color:#111">7.208</div>
<div class="a" style="left:1129px;top:1015px;width:1px;height:21px;background:#a0a0a0"></div>
<div class="t" style="left:1133px;top:1019px;font-size:14.5px;color:#111">3.480</div>
<div class="a" style="left:1234px;top:1015px;width:1px;height:21px;background:#a0a0a0"></div>
<div class="t" style="left:1238px;top:1019px;font-size:14.5px;color:#111">2.07</div>
<div class="a" style="left:1319px;top:1015px;width:1px;height:21px;background:#a0a0a0"></div>
<div class="t" style="left:1323px;top:1019px;font-size:14.5px;color:#111">2.01</div>
<div class="a" style="left:1404px;top:1015px;width:1px;height:21px;background:#a0a0a0"></div>
<div class="t" style="left:1408px;top:1019px;font-size:14.5px;color:#111">RNA</div>
<div class="a" style="left:1522px;top:1015px;width:1px;height:21px;background:#a0a0a0"></div>
<div class="t" style="left:1526px;top:1019px;font-size:14.5px;color:#111">40.00</div>
<div class="a" style="left:463px;top:1036px;width:1134px;height:21px;background:#fff;border-bottom:1px solid #a0a0a0"></div>
<div class="t" style="left:466px;top:1040px;font-size:14.5px;color:#111">19</div>
<div class="a" style="left:503px;top:1036px;width:1px;height:21px;background:#a0a0a0"></div>
<div class="t" style="left:507px;top:1040px;font-size:14.5px;color:#111">D13</div>
<div class="a" style="left:621px;top:1036px;width:1px;height:21px;background:#a0a0a0"></div>
<div class="t" style="left:625px;top:1040px;font-size:14.5px;color:#111">TP-SSV</div>
<div class="a" style="left:726px;top:1036px;width:1px;height:21px;background:#a0a0a0"></div>
<div class="t" style="left:730px;top:1040px;font-size:14.5px;color:#111">11.10.2024 13:05</div>
<div class="a" style="left:854px;top:1036px;width:1px;height:21px;background:#a0a0a0"></div>
<div class="t" style="left:858px;top:1040px;font-size:14.5px;color:#111">-0.1</div>
<div class="a" style="left:966px;top:1036px;width:1px;height:21px;background:#a0a0a0"></div>
<div class="t" style="left:970px;top:1040px;font-size:14.5px;color:#111">ng/µl</div>
<div class="a" style="left:1024px;top:1036px;width:1px;height:21px;background:#a0a0a0"></div>
<div class="t" style="left:1028px;top:1040px;font-size:14.5px;color:#111">-0.003</div>
<div class="a" style="left:1129px;top:1036px;width:1px;height:21px;background:#a0a0a0"></div>
<div class="t" style="left:1133px;top:1040px;font-size:14.5px;color:#111">-0.020</div>
<div class="a" style="left:1234px;top:1036px;width:1px;height:21px;background:#a0a0a0"></div>
<div class="t" style="left:1238px;top:1040px;font-size:14.5px;color:#111">0.16</div>
<div class="a" style="left:1319px;top:1036px;width:1px;height:21px;background:#a0a0a0"></div>
<div class="t" style="left:1323px;top:1040px;font-size:14.5px;color:#111">0.41</div>
<div class="a" style="left:1404px;top:1036px;width:1px;height:21px;background:#a0a0a0"></div>
<div class="t" style="left:1408px;top:1040px;font-size:14.5px;color:#111">RNA</div>
<div class="a" style="left:1522px;top:1036px;width:1px;height:21px;background:#a0a0a0"></div>
<div class="t" style="left:1526px;top:1040px;font-size:14.5px;color:#111">40.00</div>
<div class="a" style="left:463px;top:1057px;width:1134px;height:21px;background:#fff;border-bottom:1px solid #a0a0a0"></div>
<div class="t" style="left:466px;top:1061px;font-size:14.5px;color:#111">20</div>
<div class="a" style="left:503px;top:1057px;width:1px;height:21px;background:#a0a0a0"></div>
<div class="t" style="left:507px;top:1061px;font-size:14.5px;color:#111">D04</div>
<div class="a" style="left:621px;top:1057px;width:1px;height:21px;background:#a0a0a0"></div>
<div class="t" style="left:625px;top:1061px;font-size:14.5px;color:#111">TP-SSV</div>
<div class="a" style="left:726px;top:1057px;width:1px;height:21px;background:#a0a0a0"></div>
<div class="t" style="left:730px;top:1061px;font-size:14.5px;color:#111">11.10.2024 13:07</div>
<div class="a" style="left:854px;top:1057px;width:1px;height:21px;background:#a0a0a0"></div>
<div class="t" style="left:858px;top:1061px;font-size:14.5px;color:#111">469.9</div>
<div class="a" style="left:966px;top:1057px;width:1px;height:21px;background:#a0a0a0"></div>
<div class="t" style="left:970px;top:1061px;font-size:14.5px;color:#111">ng/µl</div>
<div class="a" style="left:1024px;top:1057px;width:1px;height:21px;background:#a0a0a0"></div>
<div class="t" style="left:1028px;top:1061px;font-size:14.5px;color:#111">11.748</div>
<div class="a" style="left:1129px;top:1057px;width:1px;height:21px;background:#a0a0a0"></div>
<div class="t" style="left:1133px;top:1061px;font-size:14.5px;color:#111">5.559</div>
<div class="a" style="left:1234px;top:1057px;width:1px;height:21px;background:#a0a0a0"></div>
<div class="t" style="left:1238px;top:1061px;font-size:14.5px;color:#111">2.11</div>
<div class="a" style="left:1319px;top:1057px;width:1px;height:21px;background:#a0a0a0"></div>
<div class="t" style="left:1323px;top:1061px;font-size:14.5px;color:#111">1.66</div>
<div class="a" style="left:1404px;top:1057px;width:1px;height:21px;background:#a0a0a0"></div>
<div class="t" style="left:1408px;top:1061px;font-size:14.5px;color:#111">RNA</div>
<div class="a" style="left:1522px;top:1057px;width:1px;height:21px;background:#a0a0a0"></div>
<div class="t" style="left:1526px;top:1061px;font-size:14.5px;color:#111">40.00</div>
<div class="a" style="left:463px;top:1078px;width:1134px;height:21px;background:#fff;border-bottom:1px solid #a0a0a0"></div>
<div class="t" style="left:466px;top:1082px;font-size:14.5px;color:#111">21</div>
<div class="a" style="left:503px;top:1078px;width:1px;height:21px;background:#a0a0a0"></div>
<div class="t" style="left:507px;top:1082px;font-size:14.5px;color:#111">D03</div>
<div class="a" style="left:621px;top:1078px;width:1px;height:21px;background:#a0a0a0"></div>
<div class="t" style="left:625px;top:1082px;font-size:14.5px;color:#111">TP-SSV</div>
<div class="a" style="left:726px;top:1078px;width:1px;height:21px;background:#a0a0a0"></div>
<div class="t" style="left:730px;top:1082px;font-size:14.5px;color:#111">11.10.2024 13:10</div>
<div class="a" style="left:854px;top:1078px;width:1px;height:21px;background:#a0a0a0"></div>
<div class="t" style="left:858px;top:1082px;font-size:14.5px;color:#111">216.0</div>
<div class="a" style="left:966px;top:1078px;width:1px;height:21px;background:#a0a0a0"></div>
<div class="t" style="left:970px;top:1082px;font-size:14.5px;color:#111">ng/µl</div>
<div class="a" style="left:1024px;top:1078px;width:1px;height:21px;background:#a0a0a0"></div>
<div class="t" style="left:1028px;top:1082px;font-size:14.5px;color:#111">5.401</div>
<div class="a" style="left:1129px;top:1078px;width:1px;height:21px;background:#a0a0a0"></div>
<div class="t" style="left:1133px;top:1082px;font-size:14.5px;color:#111">2.553</div>
<div class="a" style="left:1234px;top:1078px;width:1px;height:21px;background:#a0a0a0"></div>
<div class="t" style="left:1238px;top:1082px;font-size:14.5px;color:#111">2.12</div>
<div class="a" style="left:1319px;top:1078px;width:1px;height:21px;background:#a0a0a0"></div>
<div class="t" style="left:1323px;top:1082px;font-size:14.5px;color:#111">1.23</div>
<div class="a" style="left:1404px;top:1078px;width:1px;height:21px;background:#a0a0a0"></div>
<div class="t" style="left:1408px;top:1082px;font-size:14.5px;color:#111">RNA</div>
<div class="a" style="left:1522px;top:1078px;width:1px;height:21px;background:#a0a0a0"></div>
<div class="t" style="left:1526px;top:1082px;font-size:14.5px;color:#111">40.00</div>
<div class="a" style="left:463px;top:1099px;width:1134px;height:21px;background:#fff;border-bottom:1px solid #a0a0a0"></div>
<div class="t" style="left:466px;top:1103px;font-size:14.5px;color:#111">22</div>
<div class="a" style="left:503px;top:1099px;width:1px;height:21px;background:#a0a0a0"></div>
<div class="t" style="left:507px;top:1103px;font-size:14.5px;color:#111">D03 04 mystery</div>
<div class="a" style="left:621px;top:1099px;width:1px;height:21px;background:#a0a0a0"></div>
<div class="t" style="left:625px;top:1103px;font-size:14.5px;color:#111">TP-SSV</div>
<div class="a" style="left:726px;top:1099px;width:1px;height:21px;background:#a0a0a0"></div>
<div class="t" style="left:730px;top:1103px;font-size:14.5px;color:#111">11.10.2024 13:12</div>
<div class="a" style="left:854px;top:1099px;width:1px;height:21px;background:#a0a0a0"></div>
<div class="t" style="left:858px;top:1103px;font-size:14.5px;color:#111">535.8</div>
<div class="a" style="left:966px;top:1099px;width:1px;height:21px;background:#a0a0a0"></div>
<div class="t" style="left:970px;top:1103px;font-size:14.5px;color:#111">ng/µl</div>
<div class="a" style="left:1024px;top:1099px;width:1px;height:21px;background:#a0a0a0"></div>
<div class="t" style="left:1028px;top:1103px;font-size:14.5px;color:#111">13.396</div>
<div class="a" style="left:1129px;top:1099px;width:1px;height:21px;background:#a0a0a0"></div>
<div class="t" style="left:1133px;top:1103px;font-size:14.5px;color:#111">6.396</div>
<div class="a" style="left:1234px;top:1099px;width:1px;height:21px;background:#a0a0a0"></div>
<div class="t" style="left:1238px;top:1103px;font-size:14.5px;color:#111">2.09</div>
<div class="a" style="left:1319px;top:1099px;width:1px;height:21px;background:#a0a0a0"></div>
<div class="t" style="left:1323px;top:1103px;font-size:14.5px;color:#111">2.23</div>
<div class="a" style="left:1404px;top:1099px;width:1px;height:21px;background:#a0a0a0"></div>
<div class="t" style="left:1408px;top:1103px;font-size:14.5px;color:#111">RNA</div>
<div class="a" style="left:1522px;top:1099px;width:1px;height:21px;background:#a0a0a0"></div>
<div class="t" style="left:1526px;top:1103px;font-size:14.5px;color:#111">40.00</div>
<div class="a" style="left:463px;top:1120px;width:1134px;height:21px;background:#fff;border-bottom:1px solid #a0a0a0"></div>
<div class="t" style="left:466px;top:1124px;font-size:14.5px;color:#111">23</div>
<div class="a" style="left:503px;top:1120px;width:1px;height:21px;background:#a0a0a0"></div>
<div class="t" style="left:507px;top:1124px;font-size:14.5px;color:#111">D</div>
<div class="a" style="left:621px;top:1120px;width:1px;height:21px;background:#a0a0a0"></div>
<div class="t" style="left:625px;top:1124px;font-size:14.5px;color:#111">TP-SSV</div>
<div class="a" style="left:726px;top:1120px;width:1px;height:21px;background:#a0a0a0"></div>
<div class="t" style="left:730px;top:1124px;font-size:14.5px;color:#111">11.10.2024 13:16</div>
<div class="a" style="left:854px;top:1120px;width:1px;height:21px;background:#a0a0a0"></div>
<div class="t" style="left:858px;top:1124px;font-size:14.5px;color:#111">0.0</div>
<div class="a" style="left:966px;top:1120px;width:1px;height:21px;background:#a0a0a0"></div>
<div class="t" style="left:970px;top:1124px;font-size:14.5px;color:#111">ng/µl</div>
<div class="a" style="left:1024px;top:1120px;width:1px;height:21px;background:#a0a0a0"></div>
<div class="t" style="left:1028px;top:1124px;font-size:14.5px;color:#111">0.000</div>
<div class="a" style="left:1129px;top:1120px;width:1px;height:21px;background:#a0a0a0"></div>
<div class="t" style="left:1133px;top:1124px;font-size:14.5px;color:#111">-0.027</div>
<div class="a" style="left:1234px;top:1120px;width:1px;height:21px;background:#a0a0a0"></div>
<div class="t" style="left:1238px;top:1124px;font-size:14.5px;color:#111">0.00</div>
<div class="a" style="left:1319px;top:1120px;width:1px;height:21px;background:#a0a0a0"></div>
<div class="t" style="left:1323px;top:1124px;font-size:14.5px;color:#111">0.00</div>
<div class="a" style="left:1404px;top:1120px;width:1px;height:21px;background:#a0a0a0"></div>
<div class="t" style="left:1408px;top:1124px;font-size:14.5px;color:#111">RNA</div>
<div class="a" style="left:1522px;top:1120px;width:1px;height:21px;background:#a0a0a0"></div>
<div class="t" style="left:1526px;top:1124px;font-size:14.5px;color:#111">40.00</div>
<div class="a" style="left:463px;top:1141px;width:1134px;height:21px;background:#fff;border-bottom:1px solid #a0a0a0"></div>
<div class="t" style="left:466px;top:1145px;font-size:14.5px;color:#111">24</div>
<div class="a" style="left:503px;top:1141px;width:1px;height:21px;background:#a0a0a0"></div>
<div class="t" style="left:507px;top:1145px;font-size:14.5px;color:#111">D07</div>
<div class="a" style="left:621px;top:1141px;width:1px;height:21px;background:#a0a0a0"></div>
<div class="t" style="left:625px;top:1145px;font-size:14.5px;color:#111">TP-SSV</div>
<div class="a" style="left:726px;top:1141px;width:1px;height:21px;background:#a0a0a0"></div>
<div class="t" style="left:730px;top:1145px;font-size:14.5px;color:#111">11.10.2024 13:18</div>
<div class="a" style="left:854px;top:1141px;width:1px;height:21px;background:#a0a0a0"></div>
<div class="t" style="left:858px;top:1145px;font-size:14.5px;color:#111">287.6</div>
<div class="a" style="left:966px;top:1141px;width:1px;height:21px;background:#a0a0a0"></div>
<div class="t" style="left:970px;top:1145px;font-size:14.5px;color:#111">ng/µl</div>
<div class="a" style="left:1024px;top:1141px;width:1px;height:21px;background:#a0a0a0"></div>
<div class="t" style="left:1028px;top:1145px;font-size:14.5px;color:#111">7.190</div>
<div class="a" style="left:1129px;top:1141px;width:1px;height:21px;background:#a0a0a0"></div>
<div class="t" style="left:1133px;top:1145px;font-size:14.5px;color:#111">3.401</div>
<div class="a" style="left:1234px;top:1141px;width:1px;height:21px;background:#a0a0a0"></div>
<div class="t" style="left:1238px;top:1145px;font-size:14.5px;color:#111">2.11</div>
<div class="a" style="left:1319px;top:1141px;width:1px;height:21px;background:#a0a0a0"></div>
<div class="t" style="left:1323px;top:1145px;font-size:14.5px;color:#111">1.60</div>
<div class="a" style="left:1404px;top:1141px;width:1px;height:21px;background:#a0a0a0"></div>
<div class="t" style="left:1408px;top:1145px;font-size:14.5px;color:#111">RNA</div>
<div class="a" style="left:1522px;top:1141px;width:1px;height:21px;background:#a0a0a0"></div>
<div class="t" style="left:1526px;top:1145px;font-size:14.5px;color:#111">40.00</div>
<div class="a" style="left:463px;top:1162px;width:1134px;height:21px;background:#fff;border-bottom:1px solid #a0a0a0"></div>
<div class="t" style="left:466px;top:1166px;font-size:14.5px;color:#111">25</div>
<div class="a" style="left:503px;top:1162px;width:1px;height:21px;background:#a0a0a0"></div>
<div class="t" style="left:507px;top:1166px;font-size:14.5px;color:#111">D08</div>
<div class="a" style="left:621px;top:1162px;width:1px;height:21px;background:#a0a0a0"></div>
<div class="t" style="left:625px;top:1166px;font-size:14.5px;color:#111">TP-SSV</div>
<div class="a" style="left:726px;top:1162px;width:1px;height:21px;background:#a0a0a0"></div>
<div class="t" style="left:730px;top:1166px;font-size:14.5px;color:#111">11.10.2024 13:21</div>
<div class="a" style="left:854px;top:1162px;width:1px;height:21px;background:#a0a0a0"></div>
<div class="t" style="left:858px;top:1166px;font-size:14.5px;color:#111">268.8</div>
<div class="a" style="left:966px;top:1162px;width:1px;height:21px;background:#a0a0a0"></div>
<div class="t" style="left:970px;top:1166px;font-size:14.5px;color:#111">ng/µl</div>
<div class="a" style="left:1024px;top:1162px;width:1px;height:21px;background:#a0a0a0"></div>
<div class="t" style="left:1028px;top:1166px;font-size:14.5px;color:#111">6.721</div>
<div class="a" style="left:1129px;top:1162px;width:1px;height:21px;background:#a0a0a0"></div>
<div class="t" style="left:1133px;top:1166px;font-size:14.5px;color:#111">3.219</div>
<div class="a" style="left:1234px;top:1162px;width:1px;height:21px;background:#a0a0a0"></div>
<div class="t" style="left:1238px;top:1166px;font-size:14.5px;color:#111">2.09</div>
<div class="a" style="left:1319px;top:1162px;width:1px;height:21px;background:#a0a0a0"></div>
<div class="t" style="left:1323px;top:1166px;font-size:14.5px;color:#111">2.00</div>
<div class="a" style="left:1404px;top:1162px;width:1px;height:21px;background:#a0a0a0"></div>
<div class="t" style="left:1408px;top:1166px;font-size:14.5px;color:#111">RNA</div>
<div class="a" style="left:1522px;top:1162px;width:1px;height:21px;background:#a0a0a0"></div>
<div class="t" style="left:1526px;top:1166px;font-size:14.5px;color:#111">40.00</div>
<div class="a" style="left:463px;top:1183px;width:1134px;height:21px;background:#0078d7;border-bottom:1px solid #a0a0a0"></div>
<div class="t" style="left:466px;top:1187px;font-size:14.5px;color:#fff">26</div>
<div class="a" style="left:503px;top:1183px;width:1px;height:21px;background:#a0a0a0"></div>
<div class="t" style="left:507px;top:1187px;font-size:14.5px;color:#fff">D07 08 control</div>
<div class="a" style="left:621px;top:1183px;width:1px;height:21px;background:#a0a0a0"></div>
<div class="t" style="left:625px;top:1187px;font-size:14.5px;color:#fff">TP-SSV</div>
<div class="a" style="left:726px;top:1183px;width:1px;height:21px;background:#a0a0a0"></div>
<div class="t" style="left:730px;top:1187px;font-size:14.5px;color:#fff">11.10.2024 13:23</div>
<div class="a" style="left:854px;top:1183px;width:1px;height:21px;background:#a0a0a0"></div>
<div class="t" style="left:858px;top:1187px;font-size:14.5px;color:#fff">516.6</div>
<div class="a" style="left:966px;top:1183px;width:1px;height:21px;background:#a0a0a0"></div>
<div class="t" style="left:970px;top:1187px;font-size:14.5px;color:#fff">ng/µl</div>
<div class="a" style="left:1024px;top:1183px;width:1px;height:21px;background:#a0a0a0"></div>
<div class="t" style="left:1028px;top:1187px;font-size:14.5px;color:#fff">12.916</div>
<div class="a" style="left:1129px;top:1183px;width:1px;height:21px;background:#a0a0a0"></div>
<div class="t" style="left:1133px;top:1187px;font-size:14.5px;color:#fff">6.030</div>
<div class="a" style="left:1234px;top:1183px;width:1px;height:21px;background:#a0a0a0"></div>
<div class="t" style="left:1238px;top:1187px;font-size:14.5px;color:#fff">2.14</div>
<div class="a" style="left:1319px;top:1183px;width:1px;height:21px;background:#a0a0a0"></div>
<div class="t" style="left:1323px;top:1187px;font-size:14.5px;color:#fff">2.25</div>
<div class="a" style="left:1404px;top:1183px;width:1px;height:21px;background:#a0a0a0"></div>
<div class="t" style="left:1408px;top:1187px;font-size:14.5px;color:#fff">RNA</div>
<div class="a" style="left:1522px;top:1183px;width:1px;height:21px;background:#a0a0a0"></div>
<div class="t" style="left:1526px;top:1187px;font-size:14.5px;color:#fff">40.00</div>
<div class="a" style="left:1597px;top:990px;width:1px;height:213px;background:#a0a0a0"></div>
<div class="a" style="left:0;top:1222px;width:1917px;height:23px;background:#f0f0f0;border-top:1px solid #dcdcdc;border-bottom:1px solid #d0d0d0"></div>
<svg class="a" style="left:49px;top:1226px" width="16" height="17" viewBox="0 0 16 17"><path d="M8,0.5 L15,3 V8 C15,12 12,15 8,16.5 C4,15 1,12 1,8 V3 Z" fill="#4d9a6a" stroke="#6b8a78" stroke-width="0.8"/><path d="M4.5,8.5 L7,11 L11.5,6" fill="none" stroke="#fff" stroke-width="1.6"/></svg>
<div class="t" style="left:1862px;top:1229px;font-size:10.3px;color:#111">TP-SSV</div>
<div class="a" style="left:0;top:1245px;width:1917px;height:48px;background:linear-gradient(90deg,#e4ecf6 0%,#dbe4f6 28%,#dfe7f5 50%,#e0e8f4 75%,#e3ebf5 100%)"></div>
<svg class="a" style="left:10px;top:1248px" width="40" height="42" viewBox="10 1248 40 42">
<path d="M20.5,1279.5 V1271.5 Q20.5,1269.8 22.5,1269.8 L26,1269.8 L27.5,1268 L34,1267 Q36.5,1267 37.5,1269.5 L39.5,1271.5 V1279.5 H36 V1277.8 H24 V1279.5 Z" fill="#e8601c"/>
<circle cx="23.6" cy="1274" r="1.5" fill="#fde8d8"/><circle cx="36.6" cy="1274" r="1.5" fill="#fde8d8"/>
<circle cx="21.4" cy="1261.8" r="5.4" fill="#e8641e"/>
<rect x="20.6" y="1258.2" width="1.6" height="4.6" fill="#fff"/><rect x="20.6" y="1264" width="1.6" height="1.5" fill="#fff"/>
<circle cx="35" cy="1258.9" r="7.7" fill="#c8261e"/>
<path d="M34.2,1255.5 L36.2,1254.8 V1263 H34.8 V1256.8 L33.6,1257.2 Z" fill="#fff"/>
</svg>
<div class="t" style="left:47px;top:1255px;font-size:11.2px;color:#1a1a1a">E25 / E62 / a1</div>
<div class="t" style="left:47px;top:1270px;font-size:12.2px;color:#5a5a5a">Construction</div>
<svg class="a" style="left:702px;top:1258px" width="23" height="23" viewBox="0 0 23 23"><defs><linearGradient id="wl" x1="0" y1="0" x2="1" y2="1"><stop offset="0" stop-color="#36c6f4"/><stop offset="1" stop-color="#0f6fd6"/></linearGradient></defs><rect x="0" y="0" width="10.8" height="10.8" fill="url(#wl)"/><rect x="12.2" y="0" width="10.8" height="10.8" fill="url(#wl)"/><rect x="0" y="12.2" width="10.8" height="10.8" fill="url(#wl)"/><rect x="12.2" y="12.2" width="10.8" height="10.8" fill="url(#wl)"/></svg>
<div class="a" style="left:738px;top:1254px;width:219px;height:31px;background:#f7f9fc;border:1px solid #d4dbe5;border-radius:16px"></div>
<svg class="a" style="left:749px;top:1261px" width="17" height="17" viewBox="0 0 17 17"><circle cx="7" cy="7" r="5.5" fill="none" stroke="#222" stroke-width="1.6"/><path d="M11,11 L15.5,15.5" stroke="#222" stroke-width="1.8"/></svg>
<div class="t" style="left:775px;top:1263px;font-size:12.6px;color:#555">Search</div>
<svg class="a" style="left:900px;top:1254px" width="58" height="30" viewBox="900 1254 58 30">
<path d="M936,1256.5 Q947,1257 953,1266 M937.5,1257 L951,1272.5 M942,1257.5 Q941,1263 946,1268 Q950,1268.5 952.5,1270 M944,1260 Q947.5,1260.5 950.5,1264 M939.5,1262 Q944,1261 946.5,1264.5" fill="none" stroke="#b6a6d8" stroke-width="0.8"/>
<path d="M906,1269.5 L909.5,1268.5 L911,1265.5 L912.5,1269 L916,1270 L913,1272.5 L913.5,1276 L910.5,1274.5 L907.5,1276.5 L908,1273 Z" fill="#f2a21e"/>
<ellipse cx="928.9" cy="1272" rx="10.6" ry="8.2" fill="#ec6a1c"/>
<ellipse cx="925" cy="1271" rx="3" ry="6" fill="#f58a30" opacity="0.6"/>
<path d="M928,1264 Q927,1260.5 924.5,1259.5 L926,1258.5 Q929.5,1260 930,1264 Z" fill="#5e8a2a"/>
<circle cx="924.5" cy="1268.5" r="1.3" fill="#6a1a00"/><circle cx="933.5" cy="1268.5" r="1.3" fill="#6a1a00"/>
<path d="M922,1273 Q929,1279 936,1273 Q929,1276 922,1273 Z" fill="#6a1400"/>
</svg>
<svg class="a" style="left:969px;top:1257px" width="26" height="25" viewBox="969 1257 26 25"><defs><linearGradient id="tv" x1="0" y1="0" x2="1" y2="1"><stop offset="0" stop-color="#d8d8d8"/><stop offset="1" stop-color="#9a9a9a"/></linearGradient></defs><rect x="976.2" y="1258.2" width="16.7" height="15.3" rx="0.8" fill="#f6f6f6"/><rect x="970.2" y="1263.9" width="17.5" height="15.9" rx="0.8" fill="#262626"/><rect x="976.2" y="1263.9" width="11.5" height="9.6" fill="url(#tv)"/></svg>
<svg class="a" style="left:1056px;top:1255px" width="28" height="28" viewBox="1056 1255 28 28"><defs>
<linearGradient id="eg1" x1="0" y1="0" x2="1" y2="0.6"><stop offset="0" stop-color="#38b8f0"/><stop offset="0.5" stop-color="#2cc6c8"/><stop offset="1" stop-color="#5ee05a"/></linearGradient>
<linearGradient id="eg2" x1="0" y1="0" x2="0.6" y2="1"><stop offset="0" stop-color="#1590e8"/><stop offset="1" stop-color="#0a5cc0"/></linearGradient></defs>
<path d="M1058.2,1268 C1058.5,1261 1064,1257 1070.5,1257 C1077.5,1257 1082,1262 1082,1267.5 C1082,1271.5 1079,1273.8 1075.5,1273.8 C1072.5,1273.8 1070.5,1272.5 1069.8,1271 C1069.2,1269.8 1068.8,1268.8 1068.3,1267.8 C1066,1264.5 1062,1264 1058.2,1268 Z" fill="url(#eg1)"/>
<path d="M1058.2,1268 C1062,1264 1066.5,1264 1068.3,1267.6 C1066.5,1269 1066,1271.5 1067,1274 C1069,1278 1075,1278 1079.8,1275.2 C1077,1279.5 1073,1281.2 1069.5,1281.2 C1063,1281.2 1058,1275.5 1058.2,1268 Z" fill="url(#eg2)"/>
<path d="M1068.3,1267.6 C1066.5,1269 1066,1271.5 1067,1274 C1069,1278 1075,1278 1079.8,1275.2 C1076,1276.2 1072,1275.8 1070,1273.2 C1068.8,1271.6 1068.3,1269.6 1068.3,1267.6 Z" fill="#0b4d9c"/>
<ellipse cx="1070.2" cy="1270" rx="1.7" ry="2.2" fill="#dcecfa"/>
</svg>
<div class="a" style="left:1095px;top:1250px;width:38px;height:38px;background:#f1f4fa;border-radius:4px;border:1px solid #e3e8f0"></div>
<svg class="a" style="left:1102px;top:1257px" width="24" height="24" viewBox="0 0 24 24"><defs><linearGradient id="ta" x1="0" y1="0" x2="1" y2="0"><stop offset="0" stop-color="#c9d5ea"/><stop offset="0.5" stop-color="#8ea6cf"/><stop offset="1" stop-color="#5d78aa"/></linearGradient></defs><rect x="0" y="0" width="24" height="24" fill="url(#ta)" stroke="#3a4a78" stroke-width="0.6"/><rect x="1" y="1" width="21.5" height="6" rx="2.5" fill="#050505"/><rect x="1" y="16.5" width="21.5" height="6.5" rx="2.5" fill="#050505"/><path d="M6,15 L7.5,9 H16 L17.5,15 Z" fill="#2c3f8a"/><ellipse cx="11.5" cy="12" rx="1.6" ry="0.9" fill="#c0d6f5"/></svg>
<div class="a" style="left:1106px;top:1285px;width:16px;height:3px;background:#0067c0;border-radius:2px"></div>
<svg class="a" style="left:1146px;top:1257px" width="24" height="24" viewBox="0 0 24 24"><defs><linearGradient id="pg" x1="0" y1="0" x2="1" y2="1"><stop offset="0" stop-color="#5cc8f4"/><stop offset="1" stop-color="#1a86d8"/></linearGradient></defs><path d="M12,0.5 C5,0.5 0.5,5.5 0.5,11.5 C0.5,17.5 4,22 7.5,22.5 C9.5,22.8 10,21 9,19.5 C8,18 9,16.5 11,16.5 L16,16.5 C20,16.5 23,14 23,10 C23,4.5 18.5,0.5 12,0.5 Z" fill="url(#pg)"/><circle cx="4.3" cy="11.5" r="1.9" fill="#c84a2a"/><circle cx="7" cy="6.5" r="1.9" fill="#3aa83a"/><circle cx="11.5" cy="4" r="1.7" fill="#f0c030"/><path d="M10.5,11.5 h3 M12,10 v3" stroke="#fff" stroke-width="0.9"/><path d="M16.5,8.5 L19.5,8.5 L19,23.5 L17,23.5 Z" fill="#9a6a3a"/><rect x="16" y="7" width="4" height="3" fill="#e8e0d0"/></svg>
<div class="a" style="left:1155px;top:1286px;width:6px;height:3px;background:#6e6e6e;border-radius:2px"></div>
<svg class="a" style="left:1190px;top:1258px" width="24" height="22" viewBox="0 0 24 22"><path d="M0,1.5 Q0,0 1.5,0 L8,0 L10,2.5 L22.5,2.5 Q24,2.5 24,4 L24,20.5 Q24,22 22.5,22 L1.5,22 Q0,22 0,20.5 Z" fill="#e8a818"/><path d="M0,5 L9,5 L10.5,3.5 L24,3.5 L24,20.5 Q24,22 22.5,22 L1.5,22 Q0,22 0,20.5 Z" fill="#ffd04a"/><path d="M4.5,22 L4.5,18 Q4.5,15.5 7,15.5 L17,15.5 Q19.5,15.5 19.5,18 L19.5,22 Z" fill="#1a6cc8"/><rect x="6" y="17" width="12" height="1" fill="#5aa0e8"/></svg>
<div class="a" style="left:1199px;top:1286px;width:6px;height:3px;background:#6e6e6e;border-radius:2px"></div>
<svg class="a" style="left:1686px;top:1265px" width="12" height="8" viewBox="0 0 12 8"><path d="M1,7 L6,2 L11,7" fill="none" stroke="#222" stroke-width="1.3"/></svg>
<div class="t" style="left:1720px;top:1265px;font-size:10.2px;color:#1a1a1a">FRA</div>
<svg class="a" style="left:1759px;top:1260px" width="18" height="18" viewBox="0 0 18 18"><rect x="1" y="2.5" width="11" height="9" fill="none" stroke="#222" stroke-width="1"/><path d="M4,14.5 H12 M7,11.5 V14.5" stroke="#222" stroke-width="1"/><rect x="12" y="0.5" width="3" height="4" fill="none" stroke="#222" stroke-width="1"/><path d="M13.5,4.5 V16" stroke="#222" stroke-width="1"/></svg>
<svg class="a" style="left:1783px;top:1261px" width="18" height="16" viewBox="0 0 18 16"><path d="M1.5,5.5 H4.5 L8.5,1.5 V14.5 L4.5,10.5 H1.5 Z" fill="none" stroke="#222" stroke-width="1"/><path d="M11,5.5 Q12.5,8 11,10.5 M13,3.5 Q16,8 13,12.5 M15,1.5 Q19,8 15,14.5" fill="none" stroke="#222" stroke-width="1"/></svg>
<div class="t" style="right:47px;top:1256px;font-size:11.6px;color:#1a1a1a">13:23</div>
<div class="t" style="right:47px;top:1272px;font-size:11.6px;color:#1a1a1a">11.10.2024</div>
<svg class="a" style="left:1882px;top:1262px" width="14" height="15" viewBox="0 0 14 15"><path d="M7,0.5 C3.5,0.5 2,3 2,6 V9 L0.5,11.5 H13.5 L12,9 V6 C12,3 10.5,0.5 7,0.5 Z" fill="#003f92"/><path d="M5,12.5 Q7,15 9,12.5 Z" fill="#003f92"/></svg>
</body></html>
